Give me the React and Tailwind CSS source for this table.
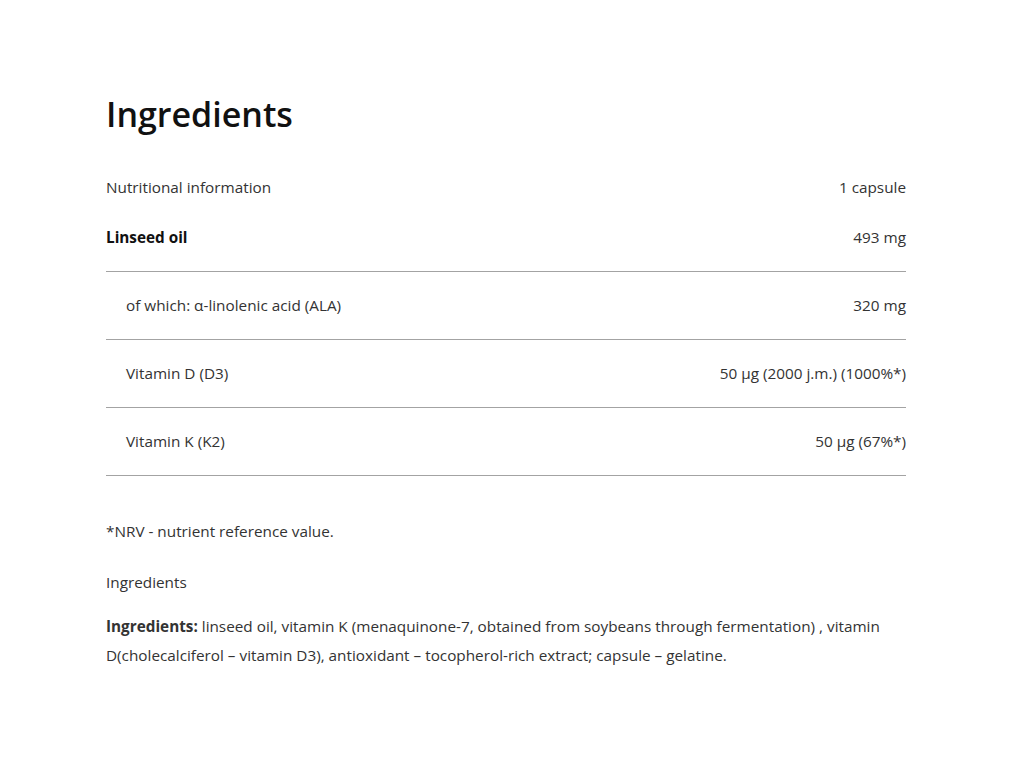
import React from 'react';

const rows = [
    { label: 'of which: α-linolenic acid (ALA)', value: '320 mg' },
    { label: 'Vitamin D (D3)', value: '50 µg (2000 j.m.) (1000%*)' },
    { label: 'Vitamin K (K2)', value: '50 µg (67%*)' },
];

const App = () => {
    return (
        <div className="min-h-[768px] bg-white font-['Open_Sans',sans-serif] text-[15.3px] text-[#333]">
            <div className="ml-[106px] w-[800px] pt-[92px]">
                <h1 className="text-[34px] leading-[44px] font-semibold text-[#111]">Ingredients</h1>

                <div className="mt-[41px]">
                    <div className="flex justify-between leading-5">
                        <span>Nutritional information</span>
                        <span>1 capsule</span>
                    </div>
                    <div className="flex justify-between leading-5 pt-[30px] pb-6 border-b border-[#a3a3a3]">
                        <span className="font-bold text-[#111]">Linseed oil</span>
                        <span>493 mg</span>
                    </div>
                    {rows.map(r => (
                        <div key={r.label} className="flex justify-between leading-5 pt-[23px] pb-6 border-b border-[#a3a3a3]">
                            <span className="pl-5">{r.label}</span>
                            <span>{r.value}</span>
                        </div>
                    ))}
                </div>

                <p className="mt-[45px] leading-5">*NRV - nutrient reference value.</p>
                <p className="mt-[31px] leading-5">Ingredients</p>
                <p className="mt-[20px] leading-[29px]">
                    <strong className="font-bold">Ingredients:</strong> linseed oil, vitamin K (menaquinone-7, obtained from soybeans through fermentation) , vitamin D(cholecalciferol – vitamin D3), antioxidant – tocopherol-rich extract; capsule – gelatine.
                </p>
            </div>
        </div>
    );
};

export default App;
